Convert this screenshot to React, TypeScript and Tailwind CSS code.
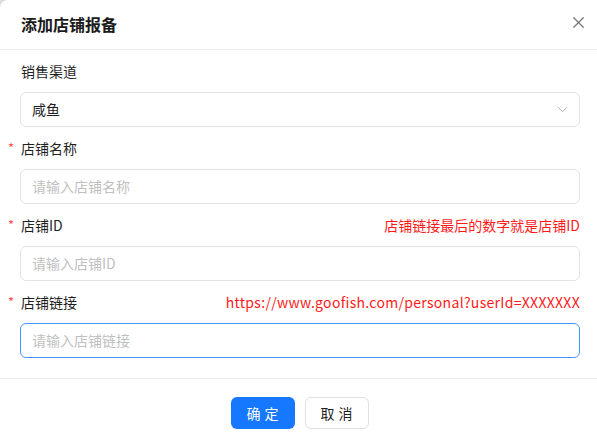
import { X, ChevronDown } from 'lucide-react'

const font = { fontFamily: '"Noto Sans CJK SC", "Liberation Sans", sans-serif' }

function Label({ text, required, hint, wide }: { text: string; required?: boolean; hint?: string; wide?: boolean }) {
  return (
    <div className="relative flex h-[22px] items-center justify-between pb-[2px] mb-[9px] text-[14px] leading-[20px]">
      {required && <span className="absolute left-[-13px] top-[0px] text-[#ff4d4f] text-[13px]">*</span>}
      <span className="text-[#1f1f1f]">{text}</span>
      {hint && <span className={'text-[#ff1a1a] ' + (wide ? 'tracking-[0.3px]' : '')}>{hint}</span>}
    </div>
  )
}

function Input({ placeholder, focused }: { placeholder: string; focused?: boolean }) {
  return (
    <div
      className={
        'h-[35px] rounded-[6px] border px-[11px] flex items-center text-[14px] text-[#bfbfbf] bg-white mb-[11px] ' +
        (focused ? 'border-[#4096ff]' : 'border-[#e3e3e3]')
      }
    >
      {placeholder}
    </div>
  )
}

export default function App() {
  return (
    <div className="w-[597px] h-[447px] bg-[#dcdcdc]" style={font}>
      <div className="w-full h-full bg-white rounded-tl-[8px] flex flex-col">
        <div className="h-[50px] flex items-center justify-between pl-[21px] pr-[9px] border-b border-[#ececec]">
          <span className="text-[16px] font-bold text-[#1a1a1a] pb-[2px]">添加店铺报备</span>
          <X className="w-[19px] h-[19px] text-[#777] mb-[4px]" strokeWidth={1.5} />
        </div>

        <div className="pl-[20px] pr-[17px] pt-[11px] pb-[9px] border-b border-[#ececec]">
          <div className="pl-[1px]">
            <Label text="销售渠道" />
          </div>
          <div className="h-[35px] rounded-[6px] border border-[#e3e3e3] pl-[11px] pr-[8px] flex items-center justify-between text-[14px] text-[#1f1f1f] mb-[11px]">
            <span>咸鱼</span>
            <ChevronDown className="w-[17px] h-[17px] text-[#a0a0a0]" strokeWidth={1.2} />
          </div>

          <div className="pl-[1px]">
            <Label text="店铺名称" required />
          </div>
          <Input placeholder="请输入店铺名称" />

          <div className="pl-[1px]">
            <Label text="店铺ID" required hint="店铺链接最后的数字就是店铺ID" />
          </div>
          <Input placeholder="请输入店铺ID" />

          <div className="pl-[1px]">
            <Label text="店铺链接" required wide hint="https://www.goofish.com/personal?userId=XXXXXXX" />
          </div>
          <Input placeholder="请输入店铺链接" focused />
        </div>

        <div className="flex justify-center gap-[10px] pt-[18px] pl-[2px]">
          <button className="w-[64px] h-[32px] rounded-[6px] bg-[#1677ff] text-white text-[14px] tracking-[4px] pl-[4px]">
            确定
          </button>
          <button className="w-[64px] h-[32px] rounded-[6px] border border-[#e0e0e0] bg-white text-[#1f1f1f] text-[14px] tracking-[4px] pl-[4px]">
            取消
          </button>
        </div>
      </div>
    </div>
  )
}
